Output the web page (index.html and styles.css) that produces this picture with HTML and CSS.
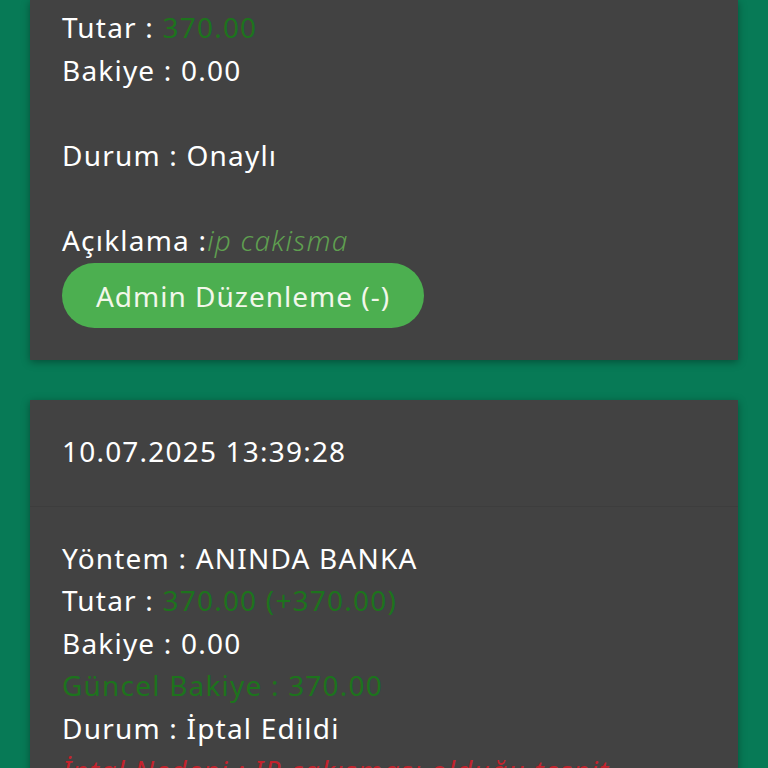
FILE: index.html
```html
<!DOCTYPE html>
<html lang="tr">
<head>
    <meta charset="UTF-8">
    <meta name="viewport" content="width=device-width, initial-scale=1.0">
    <title>Hesap Hareketleri</title>
    <link rel="stylesheet" href="styles.css">
</head>
<body>
    <div class="list">
        <div class="card card-cut">
            <div class="card-body">
                <p>Tutar : <span class="amount">370.00</span></p>
                <p>Bakiye : 0.00</p>
                <p class="blank"></p>
                <p>Durum : Onaylı</p>
                <p class="blank"></p>
                <p>Açıklama :<span class="note">ip cakisma</span></p>
                <button class="admin-btn" type="button">Admin Düzenleme (-)</button>
            </div>
        </div>

        <div class="card">
            <div class="card-head">10.07.2025 13:39:28</div>
            <div class="card-body">
                <p>Yöntem : ANINDA BANKA</p>
                <p>Tutar : <span class="amount">370.00 (+370.00)</span></p>
                <p>Bakiye : 0.00</p>
                <p class="amount">Güncel Bakiye : 370.00</p>
                <p>Durum : İptal Edildi</p>
                <p class="reason">İptal Nedeni : IP çakışması olduğu tespit</p>
            </div>
        </div>
    </div>
</body>
</html>
```

FILE: styles.css
```css
body {
    margin: 0;
    background-color: #077a56;
    font-family: 'Noto Sans', 'Lato', sans-serif;
    font-weight: 400;
    letter-spacing: 1.2px;
    color: #ffffff;
    height: 768px;
    overflow: hidden;
}
.list {
    display: flex;
    flex-direction: column;
    gap: 40px;
    padding: 0 30px;
}
.card {
    background-color: #424242;
    box-shadow: 0 2px 8px rgba(0, 0, 0, 0.35);
}
.card-head {
    font-size: 28px;
    line-height: 42.5px;
    padding: 30px 32px 33px;
    border-bottom: 1px solid #3d3d3d;
}
.card-body {
    padding: 30px 32px 0;
}
.card-cut .card-body {
    padding: 6px 32px 32px;
}
.card-body p {
    margin: 0;
    font-size: 28px;
    line-height: 42.5px;
}
.card-body p.blank {
    height: 42.5px;
}
.amount {
    color: #1d731d;
}
.note {
    color: #5f9f50;
    font-style: italic;
    font-weight: 300;
}
.reason {
    color: #c4222c;
    font-style: italic;
}
.admin-btn {
    display: block;
    margin-top: 2px;
    width: 362px;
    height: 65px;
    border: none;
    border-radius: 33px;
    background-color: #4caf50;
    color: #f2f7ea;
    font-family: 'Noto Sans', 'Lato', sans-serif;
    font-weight: 400;
    letter-spacing: 1px;
    font-size: 28px;
    padding: 0;
    cursor: pointer;
}
```
